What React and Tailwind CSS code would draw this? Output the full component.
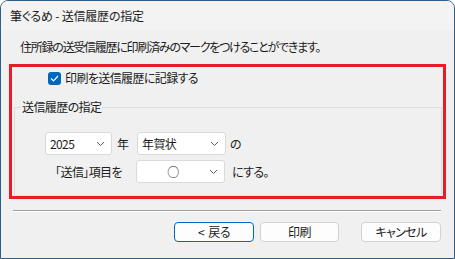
import React, { useState } from "react";

function Chevron() {
  return (
    <svg width="9" height="6" viewBox="0 0 9 6" className="shrink-0">
      <path d="M1 1 L4.5 4.5 L8 1" fill="none" stroke="#5f5f5f" strokeWidth="1" />
    </svg>
  );
}

function Select({ value, width, center }) {
  return (
    <div
      className={`${width} h-[23px] bg-white border border-[#dadada] rounded-[3px] flex items-center pr-[6px]`}
    >
      <span className={center ? "flex-1 text-center" : "flex-1 pl-[4px]"}>{value}</span>
      <Chevron />
    </div>
  );
}

function App() {
  const [record, setRecord] = useState(true);

  return (
    <div
      className="w-[455px] h-[259px] bg-[#f0f0f0] border border-[#2d5f8b] rounded-t-[8px] overflow-hidden flex flex-col text-[12px] text-[#1b1b1b] [font-feature-settings:'palt']"
      style={{ fontFamily: '"Noto Sans CJK JP", "Noto Sans", sans-serif' }}
    >
      <div className="h-[29px] shrink-0 bg-[#f3f3f3] pl-[9px] flex items-center leading-[16px] tracking-[-0.2px]">
        筆ぐるめ - 送信履歴の指定
      </div>

      <div className="flex-1 flex flex-col tracking-[-0.6px]">
        <p className="pl-[19px] pt-[9px] leading-[16px] tracking-[-1.25px]">
          住所録の送受信履歴に印刷済みのマークをつけることができます。
        </p>

        {/* highlighted area */}
        <div className="ml-[8px] mt-[9px] w-[437px] h-[135px] border-[3px] border-[#e81c24] flex flex-col">
          <label className="flex items-center h-[16px] mt-[3px] pl-[36px] gap-[4px] leading-[16px]">
            <span
              onClick={() => setRecord(!record)}
              className="w-[13px] h-[13px] rounded-[3px] bg-[#0067c0] flex items-center justify-center"
            >
              {record && (
                <svg width="9" height="7" viewBox="0 0 9 7">
                  <path d="M1 3.5 L3.5 6 L8 1" fill="none" stroke="white" strokeWidth="1.2" />
                </svg>
              )}
            </span>
            印刷を送信履歴に記録する
          </label>

          <fieldset className="mt-[13px] ml-[2px] w-[428px] flex-1 border border-[#dcdcdc] border-b-[#e3e3e3]">
            <legend className="ml-[6px] px-[1px] leading-[16px]">送信履歴の指定</legend>
            <div className="pl-[30px] pt-[17px] flex flex-col gap-[5px]">
              <div className="flex items-center">
                <Select value="2025" width="w-[67px]" />
                <span className="ml-[5px] w-[20px]">年</span>
                <Select value="年賀状" width="w-[89px]" />
                <span className="ml-[4px]">の</span>
              </div>
              <div className="flex items-center">
                <span className="w-[91px] text-right pr-[14px]">「送信」項目を</span>
                <Select value="○" width="w-[89px]" center />
                <span className="ml-[7px]">にする。</span>
              </div>
            </div>
          </fieldset>
        </div>

        <div className="ml-[12px] mr-[13px] mt-[11px] h-[2px] border-t border-[#a0a0a0] border-b border-b-white" />

        <div className="flex justify-end mr-[13px] mt-[10px] leading-[16px]">
          <button className="w-[80px] h-[20px] rounded-[4px] bg-[#fdfdfd] border border-[#0067c0]">
            &lt;&nbsp; 戻る
          </button>
          <button className="ml-[6px] w-[79px] h-[20px] rounded-[4px] bg-[#fdfdfd] border border-[#d2d2d2]">
            印刷
          </button>
          <button className="ml-[22px] w-[80px] h-[20px] rounded-[4px] bg-[#fdfdfd] border border-[#d2d2d2]">
            キャンセル
          </button>
        </div>
      </div>
    </div>
  );
}

export default App;
